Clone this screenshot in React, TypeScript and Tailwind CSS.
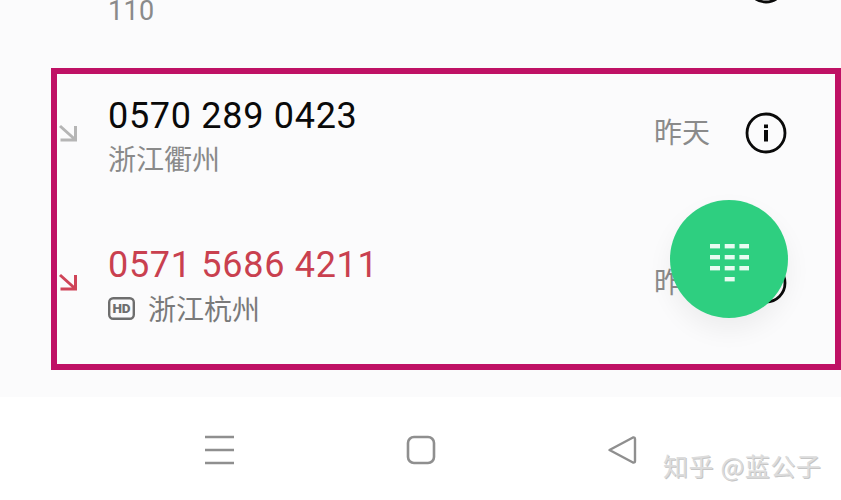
const cjk = "font-['Roboto','Noto_Sans_CJK_SC',sans-serif]"

function InfoIcon() {
  return (
    <svg width="42" height="42" viewBox="0 0 42 42" fill="none" className="block">
      <circle cx="21" cy="21" r="19" stroke="#0a0a0a" strokeWidth="2.8" />
      <rect x="19" y="18" width="4" height="11.5" fill="#0a0a0a" />
      <rect x="19" y="12.5" width="4" height="3.6" fill="#0a0a0a" />
    </svg>
  )
}

function ArrowIcon({ color }: { color: string }) {
  return (
    <svg width="20" height="20" viewBox="0 0 20 20" fill="none" className="block">
      <path d="M2 2 L16.5 15 M2.5 16 H17.5 V2" stroke={color} strokeWidth="3" />
    </svg>
  )
}

function HdBadge() {
  return (
    <svg width="27" height="23" viewBox="0 0 27 23" fill="none" className="block mb-[6px]">
      <rect x="1.2" y="1.2" width="24.6" height="20.6" rx="4" stroke="#6e6e6e" strokeWidth="2.4" />
      <text x="13.5" y="16.2" textAnchor="middle" fontFamily="Roboto" fontWeight="900" fontSize="13.5" fill="#6e6e6e">HD</text>
    </svg>
  )
}

function DialpadIcon() {
  const rows = [
    [0, 1, 2],
    [0, 1, 2],
    [0, 1, 2],
    [1],
  ]
  return (
    <svg width="39" height="38" viewBox="0 0 39 38" className="block">
      {rows.map((row, r) =>
        row.map((c) => <rect key={`${r}-${c}`} x={c * 14.7} y={r * 11} width="10" height="4.4" fill="#e8fbf1" />),
      )}
    </svg>
  )
}

function NavBar() {
  return (
    <div className="flex-1 bg-white flex items-start pt-[38px] pl-[205px]">
      <svg width="30" height="30" viewBox="0 0 30 30" fill="none" className="block">
        <path d="M0 2 H29 M0 15 H29 M0 28 H29" stroke="#8f8f8f" strokeWidth="2.6" />
      </svg>
      <svg width="30" height="30" viewBox="0 0 30 30" fill="none" className="block ml-[171px]">
        <rect x="2" y="2" width="26" height="26" rx="6" stroke="#8f8f8f" strokeWidth="2.6" />
      </svg>
      <svg width="30" height="30" viewBox="0 0 30 30" fill="none" className="block ml-[171px]">
        <path d="M2.5 15 L26 2.5 Q28 2 28 4 V26 Q28 28 26 27.5 Z" stroke="#8f8f8f" strokeWidth="2.4" strokeLinejoin="round" />
      </svg>
    </div>
  )
}

export default function App() {
  return (
    <div className={`relative w-[841px] h-[500px] overflow-hidden flex flex-col bg-[#fbfbfc] ${cjk}`}>
      {/* previous row, cut by the top edge */}
      <div className="h-[68px] shrink-0 relative">
        <div className="pl-[108px] text-[27px] leading-[22px] tracking-[0.3px] text-[#8a8a8a]">110</div>
        <div className="absolute left-[745px] top-[-38px]">
          <InfoIcon />
        </div>
      </div>

      <div className="h-[302px] shrink-0 ml-[51px] border-[6px] border-[#bf1165] flex flex-col">
        <div className="h-[150px] flex shrink-0">
          <div className="w-[51px] pl-[1px] pt-[50px]">
            <ArrowIcon color="#b5b5b5" />
          </div>
          <div className="flex-1 pt-[22px]">
            <div className="text-[36px] leading-[40px] tracking-[0.7px] text-[#0a0a0a]">0570 289 0423</div>
            <div className="mt-[6px] text-[28px] leading-[38px] text-[#8a8a8a]">浙江衢州</div>
          </div>
          <div className="flex items-start pt-[38px] pr-[48px]">
            <span className="mt-[2px] text-[28px] leading-[40px] text-[#8a8a8a]">昨天</span>
            <div className="ml-[35px]">
              <InfoIcon />
            </div>
          </div>
        </div>
        <div className="flex-1 flex">
          <div className="w-[51px] pl-[1px] pt-[49px]">
            <ArrowIcon color="#cf4458" />
          </div>
          <div className="flex-1 pt-[21px]">
            <div className="text-[36px] leading-[40px] tracking-[0.7px] text-[#c9404f]">0571 5686 4211</div>
            <div className="mt-[7px] flex items-center h-[38px]">
              <HdBadge />
              <span className="ml-[13px] text-[28px] leading-[38px] text-[#7a7a7a]">浙江杭州</span>
            </div>
          </div>
          <div className="flex items-start pt-[38px] pr-[48px]">
            <span className="mt-[2px] text-[28px] leading-[40px] text-[#8a8a8a]">昨天</span>
            <div className="ml-[35px]">
              <InfoIcon />
            </div>
          </div>
        </div>
      </div>

      <div className="h-[27px] shrink-0" />
      <NavBar />

      {/* floating dial button */}
      <div className="absolute left-[670px] top-[200px] w-[118px] h-[118px] rounded-full bg-[#2ecf80] flex items-center justify-center shadow-[0_12px_26px_rgba(0,0,0,0.06)]">
        <div className="pt-[8px]">
          <DialpadIcon />
        </div>
      </div>

      {/* watermark */}
      <div className="absolute left-[663px] top-[451px] text-[25px] leading-[28px] tracking-[0.6px] text-[#dcdcdc] whitespace-nowrap [text-shadow:1px_1px_0_#c6c6c6] font-['Noto_Sans_CJK_SC',sans-serif]">
        知乎 @蓝公子
      </div>
    </div>
  )
}
